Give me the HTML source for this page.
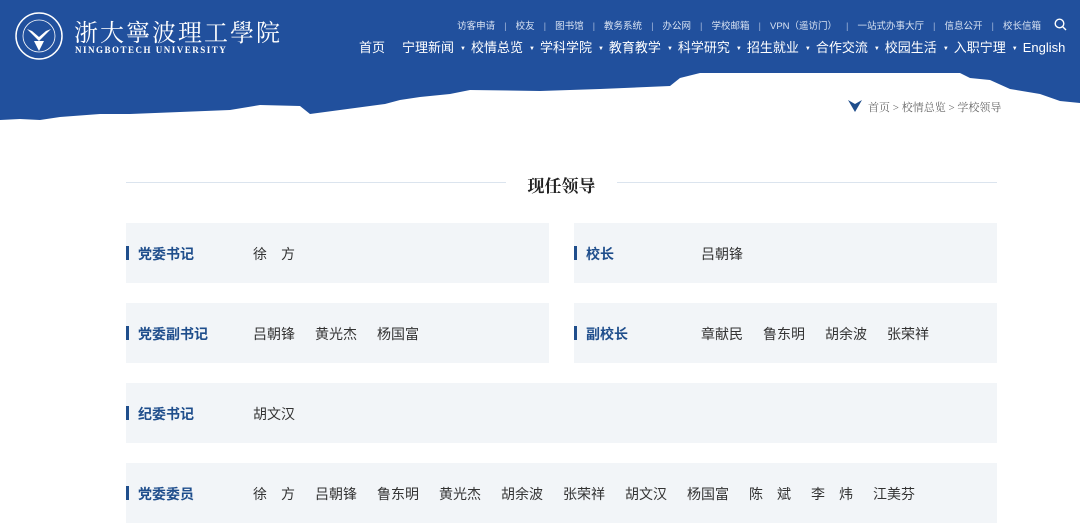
<!DOCTYPE html>
<html><head><meta charset="utf-8"><style>
*{margin:0;padding:0;box-sizing:border-box}
body{width:1080px;height:527px;overflow:hidden;background:#fff;font-family:"Liberation Sans","Noto Sans CJK SC",sans-serif;position:relative}
.hdr{position:absolute;left:0;top:0;width:1080px;height:73px;background:#21509d}
.top{position:absolute;top:18px;right:30px;font-size:9.5px;color:#d8e2f2;white-space:nowrap}
.top span{margin:0 9px}
.top i{font-style:normal;color:#9fb3d8}
.nav{position:absolute;top:37px;left:359px;font-size:13px;color:#fff;white-space:nowrap}
.nav span{margin-right:6px}
.nav b{font-weight:normal;font-size:6px;margin-right:5px;position:relative;top:-2px}
.crumb{position:absolute;top:99px;left:868px;font-size:11px;color:#666;font-family:"Liberation Serif","Noto Serif CJK SC",serif}
.title{position:absolute;top:172px;left:126px;width:871px;height:20px}
.title .l{position:absolute;top:10px;left:0;width:380px;height:1px;background:#dbe4ee}
.title .r{position:absolute;top:10px;right:0;width:380px;height:1px;background:#dbe4ee}
.title .t{position:absolute;left:0;width:871px;text-align:center;font-size:17px;font-weight:bold;color:#222;font-family:"Liberation Serif","Noto Serif CJK SC",serif;top:0}
.card{position:absolute;background:#f2f5f8;height:60px}
.card .bar{position:absolute;left:0;top:23px;width:3px;height:14px;background:#1f4e8c}
.card .lb{position:absolute;left:12px;top:21px;font-size:14px;font-weight:bold;color:#1f4e8c}
.card .nm{position:absolute;left:127px;top:21px;font-size:14px;color:#333;white-space:nowrap}
.card .nm span{display:inline-block;width:62px}
</style></head><body>
<div class="hdr"></div>
<svg style="position:absolute;left:0;top:72px" width="1080" height="70">
<polygon fill="#21509d" points="0,0 1080,0 1080,31 1060,29 1040,22 1010,17 990,8 970,6 960,1 700,1 680,6 670,14 600,17 540,19 470,18 450,22 420,25 400,28 385,32 340,38 310,42 300,34 260,33 230,38 180,40 130,42 100,42 60,45 40,48 20,47 0,48"/>
</svg>
<svg style="position:absolute;left:14px;top:11px" width="50" height="50"><circle cx="25" cy="25" r="23" fill="none" stroke="#fff" stroke-width="1.5"/><circle cx="25" cy="25" r="16" fill="none" stroke="#fff" stroke-width="0.8"/><path d="M13 18 L25 30 L37 18 L32 20 L25 26 L18 20Z M20 30 L25 40 L30 30Z" fill="#fff"/></svg>
<div style="position:absolute;left:74px;top:13px;font-size:24px;color:#fff;font-family:'Liberation Serif','Noto Serif CJK SC',serif;letter-spacing:2px">浙大寧波理工學院</div>
<div style="position:absolute;left:75px;top:45px;font-size:9px;color:#fff;font-weight:bold;letter-spacing:1.5px;font-family:'Liberation Serif',serif">NINGBOTECH UNIVERSITY</div>
<div class="top"><span>访客申请</span><i>|</i><span>校友</span><i>|</i><span>图书馆</span><i>|</i><span>教务系统</span><i>|</i><span>办公网</span><i>|</i><span>学校邮箱</span><i>|</i><span>VPN（遥访门）</span><i>|</i><span>一站式办事大厅</span><i>|</i><span>信息公开</span><i>|</i><span>校长信箱</span></div>
<svg style="position:absolute;left:1054px;top:18px" width="13" height="13"><circle cx="5.5" cy="5.5" r="4.3" fill="none" stroke="#fff" stroke-width="1.4"/><line x1="8.6" y1="8.6" x2="12" y2="12" stroke="#fff" stroke-width="1.4"/></svg>
<div class="nav"><span style="margin-right:17px">首页</span><span>宁理新闻</span><b>▼</b><span>校情总览</span><b>▼</b><span>学科学院</span><b>▼</b><span>教育教学</span><b>▼</b><span>科学研究</span><b>▼</b><span>招生就业</span><b>▼</b><span>合作交流</span><b>▼</b><span>校园生活</span><b>▼</b><span>入职宁理</span><b>▼</b><span>English</span></div>
<svg style="position:absolute;left:848px;top:100px" width="14" height="12"><path d="M0 0 L7 4 L14 0 L7 12Z" fill="#1f4e8c"/></svg>
<div class="crumb">首页 &gt; 校情总览 &gt; 学校领导</div>
<div class="title"><div class="l"></div><div class="r"></div><div class="t">现任领导</div></div>
<div class="card" style="left:126px;top:223px;width:423px"><div class="bar"></div><div class="lb">党委书记</div><div class="nm">徐　方</div></div>
<div class="card" style="left:574px;top:223px;width:423px"><div class="bar"></div><div class="lb">校长</div><div class="nm">吕朝锋</div></div>
<div class="card" style="left:126px;top:303px;width:423px"><div class="bar"></div><div class="lb">党委副书记</div><div class="nm"><span>吕朝锋</span><span>黄光杰</span><span>杨国富</span></div></div>
<div class="card" style="left:574px;top:303px;width:423px"><div class="bar"></div><div class="lb">副校长</div><div class="nm"><span>章献民</span><span>鲁东明</span><span>胡余波</span><span>张荣祥</span></div></div>
<div class="card" style="left:126px;top:383px;width:871px"><div class="bar"></div><div class="lb">纪委书记</div><div class="nm">胡文汉</div></div>
<div class="card" style="left:126px;top:463px;width:871px"><div class="bar"></div><div class="lb">党委委员</div><div class="nm"><span>徐　方</span><span>吕朝锋</span><span>鲁东明</span><span>黄光杰</span><span>胡余波</span><span>张荣祥</span><span>胡文汉</span><span>杨国富</span><span>陈　斌</span><span>李　炜</span><span>江美芬</span></div></div>
</body></html>
